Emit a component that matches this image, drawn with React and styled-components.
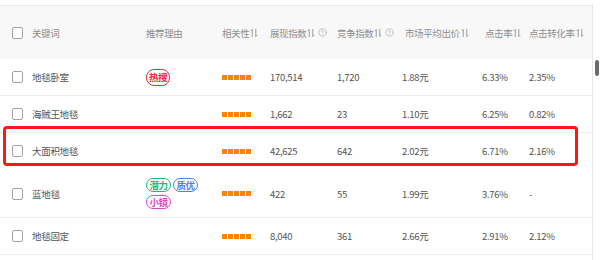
import React from "react";
import styled, { createGlobalStyle, css } from "styled-components";
import { CircleHelp } from "lucide-react";

const GlobalStyle = createGlobalStyle`
  body {
    margin: 0;
    background: #fff;
    font-family: "Noto Sans CJK SC", "Noto Sans", sans-serif;
  }
`;

const COLS = "32px 114px 76px 48px 67px 68px 80px 44px 61px";

const Page = styled.div`
  display: flex;
  width: 600px;
  height: 260px;
  padding-top: 5px;
  box-sizing: border-box;
  overflow: hidden;
`;

const Table = styled.div`
  width: 592px;
  display: flex;
  flex-direction: column;
`;

const Track = styled.div`
  width: 7px;
  border-left: 1px solid #e6e6e6;
  padding-top: 55px;
  display: flex;
  justify-content: center;
`;

const Thumb = styled.div`
  width: 4px;
  height: 16px;
  border-radius: 2px;
  background: #6b6b6b;
`;

const HeadRow = styled.div`
  display: grid;
  grid-template-columns: ${COLS};
  align-items: center;
  height: 54px;
  background: #f8f8f8;
  border-top: 1px solid #ececec;
  box-sizing: border-box;
  font-size: 9.5px;
  letter-spacing: -0.4px;
  color: #8e8e8e;
`;

const Row = styled.div`
  position: relative;
  display: grid;
  grid-template-columns: ${COLS};
  align-items: center;
  height: ${(p) => p.$h || 37}px;
  border-bottom: 1px solid #ededed;
  box-sizing: border-box;
  font-size: 9.5px;
  letter-spacing: -0.3px;
  color: #555;
  ${(p) =>
    p.$marked &&
    css`
      border-bottom-color: transparent;
      &::after {
        content: "";
        position: absolute;
        left: 3px;
        right: 14px;
        top: -7px;
        bottom: 3px;
        border: 3px solid #ff1717;
        border-radius: 4px;
      }
    `}
`;

const Cell = styled.div`
  display: flex;
  align-items: center;
  gap: 1px;
  white-space: nowrap;
  margin-left: ${(p) => p.$shift || 0}px;
`;

const Box = styled.span`
  display: block;
  width: 11px;
  height: 12px;
  margin-left: 12px;
  border: 1px solid #a3a3a3;
  border-radius: 2px;
  box-sizing: border-box;
  background: #fff;
`;

const Tags = styled.div`
  display: flex;
  flex-wrap: wrap;
  gap: 3px 2px;
  width: 54px;
`;

const tagColors = {
  hot: "#f0263a",
  potential: "#26b574",
  quality: "#4f7dfa",
  mirror: "#dc48c6",
};

const Tag = styled.span`
  display: inline-flex;
  align-items: center;
  justify-content: center;
  width: ${(p) => (p.$kind === "hot" ? 24 : 25)}px;
  height: ${(p) => (p.$kind === "hot" ? 17 : 14)}px;
  border: 1px solid ${(p) => tagColors[p.$kind]};
  color: ${(p) => tagColors[p.$kind]};
  border-radius: 8px;
  font-size: 9.5px;
  font-weight: 700;
  box-sizing: border-box;
  letter-spacing: -0.5px;
`;

const Dots = styled.div`
  display: flex;
  gap: 1px;
`;

const Dot = styled.span`
  width: 5px;
  height: 5px;
  background: #f5860b;
`;

const SortIcon = () => (
  <svg width="8" height="10" viewBox="0 0 9 11" fill="none" stroke="#8e8e8e" strokeWidth="1">
    <path d="M2.5 10V1.5L0.8 3.2" />
    <path d="M6.5 1V9.5L8.2 7.8" />
  </svg>
);

const Help = styled(CircleHelp)`
  margin-left: 2px;
  color: #b5b5b5;
`;

const rows = [
  { kw: "地毯卧室", tags: ["hot"], shows: "170,514", comp: "1,720", bid: "1.88元", ctr: "6.33%", cvr: "2.35%" },
  { kw: "海贼王地毯", tags: [], shows: "1,662", comp: "23", bid: "1.10元", ctr: "6.25%", cvr: "0.82%" },
  { kw: "大面积地毯", tags: [], shows: "42,625", comp: "642", bid: "2.02元", ctr: "6.71%", cvr: "2.16%", marked: true },
  { kw: "蓝地毯", tags: ["potential", "quality", "mirror"], shows: "422", comp: "55", bid: "1.99元", ctr: "3.76%", cvr: "-", h: 48 },
  { kw: "地毯固定", tags: [], shows: "8,040", comp: "361", bid: "2.66元", ctr: "2.91%", cvr: "2.12%" },
];

const tagText = { hot: "热搜", potential: "潜力", quality: "质优", mirror: "小镜" };

export default function App() {
  return (
    <Page>
      <GlobalStyle />
      <Table>
        <HeadRow>
          <Cell><Box /></Cell>
          <Cell>关键词</Cell>
          <Cell>推荐理由</Cell>
          <Cell>相关性<SortIcon /></Cell>
          <Cell>展现指数<SortIcon /><Help size={9} /></Cell>
          <Cell>竞争指数<SortIcon /><Help size={9} /></Cell>
          <Cell>市场平均出价<SortIcon /></Cell>
          <Cell>点击率<SortIcon /></Cell>
          <Cell>点击转化率<SortIcon /></Cell>
        </HeadRow>
        {rows.map((r) => (
          <Row key={r.kw} $h={r.h} $marked={r.marked}>
            <Cell><Box /></Cell>
            <Cell>{r.kw}</Cell>
            <Cell>
              <Tags>
                {r.tags.map((t) => (
                  <Tag key={t} $kind={t}>{tagText[t]}</Tag>
                ))}
              </Tags>
            </Cell>
            <Cell>
              <Dots>
                {[0, 1, 2, 3, 4].map((i) => <Dot key={i} />)}
              </Dots>
            </Cell>
            <Cell>{r.shows}</Cell>
            <Cell>{r.comp}</Cell>
            <Cell $shift={-3}>{r.bid}</Cell>
            <Cell $shift={-3}>{r.ctr}</Cell>
            <Cell>{r.cvr}</Cell>
          </Row>
        ))}
      </Table>
      <Track>
        <Thumb />
      </Track>
    </Page>
  );
}
